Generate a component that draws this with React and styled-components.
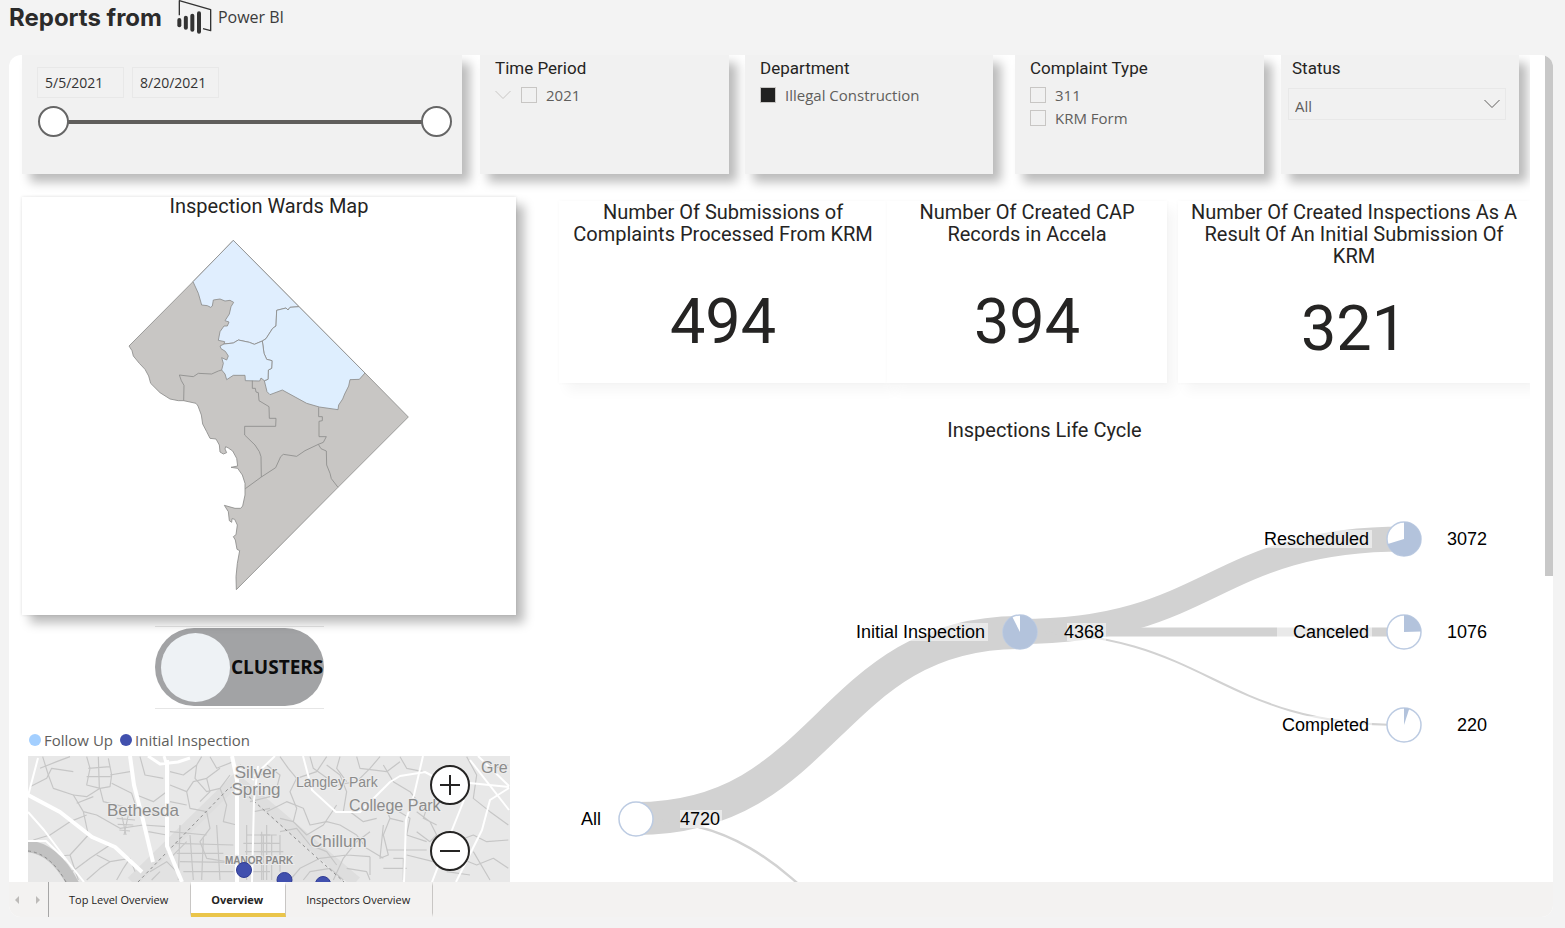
import React, { useState } from "react";
import styled, { createGlobalStyle } from "styled-components";

const din = `Roboto, "Liberation Sans", sans-serif`;
const segoe = `"Open Sans", "Noto Sans", sans-serif`;
const arial = `"Liberation Sans", Arial, sans-serif`;

const GlobalStyle = createGlobalStyle`
  *, *::before, *::after { box-sizing: border-box; }
  body { margin: 0; background: #f3f3f3; color: #252423; font-family: ${segoe}; }
  h1, h2, p, ul { margin: 0; padding: 0; font-weight: 500; }
  button, input, select { font: inherit; color: inherit; margin: 0; }
  svg { display: block; }
`;

const Page = styled.div`
  display: flex;
  flex-direction: column;
  height: 100vh;
  padding: 0 12px 11px 9px;
`;

const Header = styled.header`
  display: flex;
  align-items: flex-start;
  height: 55px;
  flex: none;
`;

const PageTitle = styled.h1`
  font: 700 24px/36px Inter, sans-serif;
  color: #2b2b2b;
  margin-right: 14px;
`;

const Brand = styled.span`
  display: flex;
  align-items: center;
  gap: 6px;
  font-size: 16px;
  line-height: 34px;
  color: #3b3b3b;
`;

const Frame = styled.main`
  flex: 1;
  min-height: 0;
  display: flex;
  flex-direction: column;
  border-radius: 12px;
  overflow: hidden;
  background: #fff;
`;

const Viewport = styled.div`
  flex: 1;
  min-height: 0;
  display: flex;
`;

const Canvas = styled.div`
  flex: 1;
  min-width: 0;
  overflow: hidden;
  padding-left: 13px;
  margin-right: 15px;
`;

const ScrollThumb = styled.div`
  width: 8px;
  height: 63%;
  background: #c8c8c8;
`;

const FilterRow = styled.section`
  display: grid;
  grid-template-columns: 440fr 267fr 264fr 271fr 255fr;
  height: 119px;
  padding-right: 11px;
`;

const FilterCard = styled.div`
  min-width: 0;
  margin-left: ${(p) => p.$gap || 0}px;
  padding: ${(p) => p.$padding || "2px 15px"};
  background: #f1f1f1;
  box-shadow: 8px 8px 10px rgba(0, 0, 0, 0.27);
`;

const FilterTitle = styled.h2`
  display: block;
  font: 400 17px/22px ${din};
  margin-bottom: 4px;
  padding-left: ${(p) => p.$inset || 0}px;
`;

const DateFields = styled.div`
  display: flex;
  gap: 8px;
`;

const DateInput = styled.input`
  width: 87px;
  height: 31px;
  padding: 0 7px;
  border: 1px solid #e8e8e8;
  background: transparent;
  font-size: 14px;
  color: #333;
`;

const RangeSlider = styled.div`
  display: grid;
  align-items: center;
  margin-top: 8px;
  margin-left: 1px;
  height: 31px;

  &::before {
    content: "";
    grid-area: 1 / 1;
    height: 4px;
    margin: 0 15px;
    background: #605e5c;
  }
`;

const RangeHandle = styled.input`
  grid-area: 1 / 1;
  appearance: none;
  width: 100%;
  height: 31px;
  background: transparent;
  pointer-events: none;

  &::-webkit-slider-thumb {
    appearance: none;
    width: 31px;
    height: 31px;
    border-radius: 50%;
    border: 2px solid #666;
    background: #fff;
    pointer-events: auto;
  }
`;

const Option = styled.label`
  display: flex;
  align-items: center;
  gap: 9px;
  height: 23px;
  font-size: 15px;
  color: #605e5c;

  > svg { margin-right: 1px; }
`;

const CheckBox = styled.input`
  appearance: none;
  flex: none;
  width: 16px;
  height: 16px;
  border: 1px solid #c8c6c4;
  background: transparent;

  &:checked { background: #212121; }
`;

const SelectBox = styled.div`
  display: grid;
  align-items: center;
  margin-top: 9px;
  color: #605e5c;

  > * { grid-area: 1 / 1; }
  > svg { justify-self: end; margin-right: 6px; pointer-events: none; }
`;

const Select = styled.select`
  appearance: none;
  width: 100%;
  height: 32px;
  padding: 3px 6px 0;
  border: 1px solid #e8e8e8;
  border-radius: 0;
  background: transparent;
  font-size: 15px;
`;

const Body = styled.div`
  display: grid;
  grid-template-columns: 494fr 971fr;
  column-gap: 43px;
  align-items: start;
  margin-top: 23px;
`;

const LeftColumn = styled.div`
  min-width: 0;
`;

const RightColumn = styled.div`
  min-width: 0;
  padding-top: 4px;
`;

const WardsCard = styled.section`
  position: relative;
  z-index: 1;
  height: 418px;
  background: #fff;
  box-shadow: 8px 8px 10px rgba(0, 0, 0, 0.27), 0 0 3px rgba(0, 0, 0, 0.12);

  > svg { margin: 23px auto 0; }
`;

const SectionTitle = styled.h2`
  font: 400 20px/${(p) => p.$line || 22}px ${din};
  text-align: center;
`;

const ToggleSlot = styled.div`
  display: flex;
  width: 169px;
  margin: 11px 0 0 133px;
  padding: 1px 0 2px;
  border-top: 1px solid #e6e6e6;
  border-bottom: 1px solid #e6e6e6;
`;

const Toggle = styled.button`
  display: flex;
  align-items: center;
  width: 100%;
  height: 78px;
  padding: 0 0 0 6px;
  border: 0;
  border-radius: 39px;
  background: #a2a3a5;
  font-size: 19px;
  font-weight: 700;
  color: #0c0c0c;
`;

const Knob = styled.span`
  flex: none;
  width: 69px;
  height: 69px;
  margin-right: 1px;
  border-radius: 50%;
  background: #eef2f5;
`;

const Legend = styled.ul`
  display: flex;
  gap: 7px;
  margin: 19px 0 4px 7px;
  list-style: none;
  font-size: 15px;
  line-height: 24px;
  color: #605e5c;
`;

const LegendItem = styled.li`
  display: flex;
  align-items: center;
  gap: 3px;

  &::before {
    content: "";
    width: 12px;
    height: 12px;
    border-radius: 50%;
    background: ${(p) => p.$color};
  }
`;

const BaseMap = styled.section`
  position: relative;
  margin: 0 6px;

  > svg { width: 100%; height: auto; }
`;

const ZoomControls = styled.div`
  position: absolute;
  top: 9px;
  right: 40px;
  display: flex;
  flex-direction: column;
  gap: 26px;
`;

const ZoomButton = styled.button`
  display: grid;
  place-items: center;
  width: 40px;
  height: 40px;
  padding: 0;
  border: 2px solid #252423;
  border-radius: 50%;
  background: #fff;
`;

const KpiRow = styled.section`
  display: grid;
  grid-template-columns: 328fr 280fr 363fr;
  height: 182px;
`;

const KpiCard = styled.article`
  min-width: 0;
  display: flex;
  flex-direction: column;
  margin-left: ${(p) => p.$gap || 0}px;
  padding: 0 8px;
  background: #fff;
  box-shadow: 8px 8px 12px rgba(0, 0, 0, 0.04), 0 0 4px rgba(0, 0, 0, 0.03);

  &::after { content: ""; flex: 1; }
`;

const KpiValue = styled.p`
  flex: 2 0 auto;
  display: flex;
  align-items: flex-end;
  justify-content: center;
  font: 400 63px/95px ${din};
`;

const LifeCycle = styled.section`
  margin-top: 36px;

  > svg { width: 100%; height: auto; font: 18px ${arial}; fill: #000; }
`;

const TabBar = styled.nav`
  display: flex;
  flex: none;
  height: 35px;
  background: #f3f2f1;
`;

const Pager = styled.div`
  display: flex;
  align-items: center;
  justify-content: space-between;
  width: 40px;
  padding: 0 6px 0 4px;
  border-right: 1px solid #a6a6a6;
`;

const PagerButton = styled.button`
  padding: 0;
  border: 0;
  background: none;
  color: #bdbbb9;
`;

const Tab = styled.button`
  padding: 0 22px 0 20px;
  border: 0;
  border-right: 1px solid #c8c6c4;
  border-top: 4px solid transparent;
  border-bottom: 4px solid ${(p) => (p.$active ? "#eac54a" : "transparent")};
  background: ${(p) => (p.$active ? "#fff" : "transparent")};
  background-clip: border-box;
  font-size: 11px;
  font-weight: ${(p) => (p.$active ? 700 : 400)};
  color: #252423;
`;

function PowerBiLogo() {
  return (
    <svg width="36" height="34" viewBox="531 0 108 102" fill="none" stroke="#333" aria-hidden="true">
      <path d="M541 46V2L635 29V92L612 86" strokeWidth="4" strokeLinejoin="round" />
      <g strokeWidth="12" strokeLinecap="round">
        <path d="M541 60V76" />
        <path d="M560.500 53V83" />
        <path d="M580 47V89" />
        <path d="M600 40V95" />
      </g>
    </svg>
  );
}

function Chevron({ color }) {
  return (
    <svg width="16" height="10" viewBox="0 0 16 10" fill="none" stroke={color} aria-hidden="true">
      <path d="M.5 1 8 8.500 15.500 1" />
    </svg>
  );
}

function WardsMap() {
  return (
    <svg width="284" height="354" viewBox="51 144 852 1062" stroke="#8c8b8a" strokeWidth="2.500" strokeLinejoin="round" role="img" aria-label="Wards">
      <path
        fill="#c8c6c4"
        d="M370 151 567 350 765 549 895 681 684 892 379 1199 378 1160 382 1120 389 1082 381 1078 376 1050 370 1040 378 1034 382 1005 374 988 366 986 365 997 358 992 355 965 343 946 375 955 392 955 398 948 405 915 405 880 397 855 383 835 363 832 383 828 380 805 368 783 355 774 347 770 345 777 350 788 340 792 330 786 328 765 318 747 300 745 290 725 278 702 274 675 264 648 258 640 221 632 205 632 180 627 150 608 122 580 116 558 105 538 88 520 70 498 66 482 57 468 249 275Z"
      />
      <path
        fill="#e0eefe"
        d="M370 151 567 350 540 352 534 360 528 354 500 361 498 408 488 415 468 446 457 453 433 463 418 457 385 450 370 459 342 462 344 455 325 451 330 425 342 408 352 408 357 396 345 392 358 372 363 350 371 337 360 331 345 333 330 327 310 330 307 348 302 352 292 347 275 345 265 310 249 275Z"
      />
      <path
        fill="#deeefe"
        d="M567 350 765 549 748 568 720 569 716 588 704 612 698 627 686 645 684 659 628 651 590 640 517 600 480 614 471 605 463 572 474 568 475 540 485 535 486 512 470 508 462 490 457 453 468 446 488 415 498 408 500 361 528 354 534 360 540 352Z"
      />
      <path
        fill="#deeefe"
        d="M342 462 370 459 385 450 418 457 433 463 457 453 462 490 470 508 486 512 485 535 475 540 474 568 463 572 453 564 449 573 406 572 405 556 370 556 350 569 345 552 335 540 340 520 335 503 350 510 355 498 346 484 333 476 330 468Z"
      />
      <g fill="none">
        <path d="M335 540 325 543 305 552 265 550 250 560 208 555 214 572 222 586 221 632" />
        <path d="M427 572V595H436L438 606 445 608 447 632 477 650 478 685H498L497 709H404V735L435 765 448 785 453 800 454 861" />
        <path d="M406 896 454 861 497 833 512 800 520 793 560 799 585 782 625 763 640 757 649 740H627V694L637 692V680H626V652" />
        <path d="M625 763 633 776 649 783 650 825 660 850 664 866 684 892" />
      </g>
    </svg>
  );
}

function StreetMap() {
  return (
    <svg viewBox="28 756 482 126" fill="none" role="img" aria-label="Street map">
      <rect x="28" y="756" width="482" height="126" fill="#e8e8e8" />
      <path d="M140 882 236 786 344 882Z" fill="#e2e2e2" />
      <path d="M132 882 236 780 356 882" stroke="#dedede" strokeWidth="12" />

      <g transform="translate(20 725) scale(.33333)" stroke="#c6c6c6" strokeWidth="3.500" strokeLinejoin="round">
        <path d="M68 95 85 150 100 190 160 210 190 260 205 330" />
        <path d="M60 130 110 110 150 95M30 185 80 160 95 130 160 140" />
        <path d="M200 95 210 130 200 180 240 190 270 185 275 150 265 100M205 130 270 125M200 155 272 155M235 95 238 190" />
        <path d="M270 150 330 140M275 175 335 205 350 250M240 190 250 230 310 245" />
        <path d="M160 210 200 215 240 190M170 235 220 215M190 260 230 270 300 310 370 300 440 305" />
        <path d="M40 345 90 330 150 290 200 270M60 400 150 390 205 330M150 390 175 465M110 470 170 430 210 400 270 360" />
        <path d="M230 390 270 410 330 400 345 440M200 465 240 430 270 410M290 465 310 430 330 400" />
        <path d="M290 280 345 285M293 298 340 300M298 315 330 318M305 270 318 330M325 270 312 330" />
        <path d="M360 95 375 150 430 160M350 210 400 230 440 200M380 260 440 270M385 320 440 330" />
        <path d="M450 140 490 150 530 120 545 95M450 180 500 200 520 170 560 160 600 130" />
        <path d="M500 200 510 250 560 260 570 310 540 350 560 400 620 410M450 230 500 240" />
        <path d="M530 120 525 160 560 200 600 190 630 150M560 160 570 200 540 230" />
        <path d="M450 320 560 330M465 355 640 360M470 385 610 385M480 410 620 412M490 440 640 440" />
        <path d="M480 300 475 465M510 330 520 465M550 340 545 465M590 300 600 465M500 350 450 400" />
        <path d="M600 190 620 240 610 290 650 300M570 95 590 130 640 110M680 330H750M670 355H750M675 380H750M670 440H750" />
        <path d="M680 300V465M725 320V465M740 300V465M690 230 750 215M700 260 750 250M660 120 720 150 750 140" />
        <path d="M390 440 440 410 470 440M395 465 420 440" />
      </g>
      <g transform="translate(260 725) scale(.33333)" stroke="#c6c6c6" strokeWidth="3.500" strokeLinejoin="round">
        <path d="M60 95 85 130 110 160 90 200 110 250 100 290 60 280M110 160 170 140 200 95" />
        <path d="M150 95 160 130 230 180 290 170 330 130 360 95M200 120 240 150 260 200 250 260" />
        <path d="M20 260 80 230 130 250 150 300 200 290 240 300 290 330 320 370 370 400" />
        <path d="M100 290 140 330 190 300 230 240M60 320 110 310 150 360 200 380 230 420" />
        <path d="M0 330H50M0 355H60M0 380H70M10 330V465M35 330V465M60 330V440" />
        <path d="M90 465 120 430 180 400 260 390 330 395M220 465 250 400 290 350 330 320" />
        <path d="M130 465 150 440 210 430 250 465M260 430 320 440 330 465M330 395V450" />
        <path d="M370 230 390 280 370 330 385 390 360 400 370 300M390 280 430 290" />
        <path d="M400 250 450 280 440 330 500 350M380 375H500M400 400H430V465M370 430H440" />
        <path d="M470 260 510 290 530 330 510 350 470 320M500 250 490 280 530 300M440 390 520 410" />
        <path d="M420 95 440 130 490 140M370 120 400 170 450 200 490 250M290 95 300 130 380 140 420 110" />
        <path d="M560 360 640 330 680 350 745 345M600 400 650 420 700 400 745 430M640 380 690 465M560 440 630 450" />
        <path d="M620 95 650 150 640 220 690 260 745 300M680 110 700 130 745 120" />
        <path d="M240 95 230 130 260 170M20 120 60 150 50 190M270 260 310 290 350 280" />
      </g>

      <path d="M28 842 Q53 842 70 882H28Z" fill="#e8e8e8" />
      <path d="M24 846Q54 846 74 886" stroke="#c2c2c2" strokeWidth="12" />
      <path d="M28 851Q50 853 66 882M138 882 228 789 236 785 344 882" stroke="#8f8f8f" strokeDasharray="3 3" />

      <g stroke="#fff" strokeWidth="3" strokeLinejoin="round">
        <path d="M28 795 60 812 92 837 115 847 142 872" strokeWidth="4" />
        <path d="M130 756 134 785 143 820 153 862M167 760V846L182 882" strokeWidth="4" />
        <path d="M148 756 160 764 178 762 190 758M164 756 167 766" />
        <path d="M232 756 237 780V882" strokeWidth="4" />
        <path d="M258 766 254 800 252 882M234 765 254 780M254 776 275 756M28 796 38 758M28 812 44 830 68 862 84 882M28 841H46L66 860" strokeWidth="2" />
        <path d="M303 756 312 790 336 812H360L390 782 400 776 425 772 440 780 509 787" strokeWidth="2" />
        <path d="M423 756 414 795 406 820 404 882M478 756 509 786M470 760 509 810" strokeWidth="2" />
        <path d="M509 788 490 800 482 830 456 882M464 800 452 830 432 882" strokeWidth="2" />
      </g>

      <g fill="#8b8b8b" fontFamily="Liberation Sans, Arial, sans-serif" fontSize="17" stroke="#ececec" strokeWidth="2" paintOrder="stroke">
        <text x="107" y="816">Bethesda</text>
        <text x="256" y="778" textAnchor="middle">Silver</text>
        <text x="256" y="795" textAnchor="middle">Spring</text>
        <text x="296" y="787" fontSize="14">Langley Park</text>
        <text x="349" y="811" fontSize="16">College Park</text>
        <text x="310" y="847">Chillum</text>
        <text x="481" y="773" fontSize="16">Gre</text>
        <text x="225" y="864" fontSize="10" fontWeight="700">MANOR PARK</text>
      </g>

      <g fill="#4150ae" stroke="#303c94">
        <circle cx="244" cy="870" r="7.500" />
        <circle cx="284.500" cy="880" r="7.500" />
        <circle cx="323" cy="884" r="7.500" />
      </g>
    </svg>
  );
}

const flows = [
  { d: "M636 818.500C828 818.500 828 632.500 1020 632.500", w: 33 },
  { d: "M636 819C828 819 828 1005 1020 1005", w: 2.5 },
  { d: "M1020 631.500C1212 631.500 1212 539 1404 539", w: 25 },
  { d: "M1020 632H1404", w: 9 },
  { d: "M1020 632C1212 632 1212 725 1404 725", w: 2 },
];

const nodes = [
  { x: 636, y: 819, share: 0, label: "All", value: "4720", labelX: 601, valueX: 680, anchor: "start", plate: [680, 42] },
  { x: 1020, y: 632, share: 0.925, label: "Initial Inspection", value: "4368", labelX: 985, valueX: 1064, anchor: "start", cover: [857, 131], plate: [1067, 39] },
  { x: 1404, y: 539, share: 0.703, label: "Rescheduled", value: "3072", labelX: 1369, valueX: 1487, anchor: "end", cover: [1265, 107] },
  { x: 1404, y: 632, share: 0.246, label: "Canceled", value: "1076", labelX: 1369, valueX: 1487, anchor: "end", cover: [1277, 95] },
  { x: 1404, y: 725, share: 0.05, label: "Completed", value: "220", labelX: 1369, valueX: 1487, anchor: "end", cover: [1281, 91] },
];

function Node({ x, y, share, label, value, labelX, valueX, anchor, cover, plate }) {
  const r = 17;
  const a = share * Math.PI * 2;
  const slice = `M${x} ${y}V${y - r}A${r} ${r} 0 ${share > 0.5 ? 1 : 0} 1 ${x + r * Math.sin(a)} ${y - r * Math.cos(a)}Z`;
  return (
    <g>
      <circle cx={x} cy={y} r={r} fill="#fff" stroke="#bccbe2" strokeWidth="1.500" />
      {share > 0 && <path d={slice} fill="#b3c3dc" />}
      <g fill="#fff" fillOpacity=".5">
        {cover && <rect x={cover[0]} y={y - 9} width={cover[1]} height="18" />}
        {plate && <rect x={plate[0]} y={y - 9} width={plate[1]} height="18" />}
      </g>
      <text x={labelX} y={y + 6} textAnchor="end">{label}</text>
      <text x={valueX} y={y + 6} textAnchor={anchor}>{value}</text>
    </g>
  );
}

function LifeCycleChart() {
  return (
    <svg viewBox="559 441 971 441" role="img" aria-label="Inspections flow">
      <g fill="none" stroke="#d2d2d2">
        {flows.map((f) => (
          <path key={f.d} d={f.d} strokeWidth={f.w} />
        ))}
      </g>
      {nodes.map((n) => (
        <Node key={n.label} {...n} />
      ))}
    </svg>
  );
}

const kpis = [
  { title: "Number Of Submissions of Complaints Processed From KRM", value: 494 },
  { title: "Number Of Created CAP Records in Accela", value: 394 },
  { title: "Number Of Created Inspections As A Result Of An Initial Submission Of KRM", value: 321, gap: 11 },
];

const tabs = ["Top Level Overview", "Overview", "Inspectors Overview"];

export default function App() {
  const [tab, setTab] = useState("Overview");
  const [clusters, setClusters] = useState(false);

  return (
    <>
      <GlobalStyle />
      <Page>
        <Header>
          <PageTitle>Reports from</PageTitle>
          <Brand>
            <PowerBiLogo />
            Power BI
          </Brand>
        </Header>
        <Frame>
          <Viewport>
            <Canvas>
              <FilterRow>
                <FilterCard $padding="12px 10px 0 15px">
                  <DateFields>
                    <DateInput aria-label="Start date" defaultValue="5/5/2021" />
                    <DateInput aria-label="End date" defaultValue="8/20/2021" />
                  </DateFields>
                  <RangeSlider>
                    <RangeHandle type="range" aria-label="Range start" defaultValue={0} />
                    <RangeHandle type="range" aria-label="Range end" defaultValue={100} />
                  </RangeSlider>
                </FilterCard>
                <FilterCard $gap={18}>
                  <FilterTitle>Time Period</FilterTitle>
                  <Option>
                    <Chevron color="#c8c6c4" />
                    <CheckBox type="checkbox" />
                    2021
                  </Option>
                </FilterCard>
                <FilterCard $gap={16}>
                  <FilterTitle>Department</FilterTitle>
                  <Option>
                    <CheckBox type="checkbox" defaultChecked />
                    Illegal Construction
                  </Option>
                </FilterCard>
                <FilterCard $gap={22}>
                  <FilterTitle>Complaint Type</FilterTitle>
                  <Option>
                    <CheckBox type="checkbox" />
                    311
                  </Option>
                  <Option>
                    <CheckBox type="checkbox" />
                    KRM Form
                  </Option>
                </FilterCard>
                <FilterCard $gap={17} $padding="2px 13px 2px 7px">
                  <FilterTitle as="label" htmlFor="status" $inset={4}>Status</FilterTitle>
                  <SelectBox>
                    <Select id="status">
                      <option>All</option>
                    </Select>
                    <Chevron color="#605e5c" />
                  </SelectBox>
                </FilterCard>
              </FilterRow>
              <Body>
                <LeftColumn>
                  <WardsCard>
                    <SectionTitle $line={18}>Inspection Wards Map</SectionTitle>
                    <WardsMap />
                  </WardsCard>
                  <ToggleSlot>
                    <Toggle role="switch" aria-checked={clusters} onClick={() => setClusters(!clusters)}>
                      <Knob />
                      CLUSTERS
                    </Toggle>
                  </ToggleSlot>
                  <Legend>
                    <LegendItem $color="#a3cfff">Follow Up</LegendItem>
                    <LegendItem $color="#4150ae">Initial Inspection</LegendItem>
                  </Legend>
                  <BaseMap>
                    <StreetMap />
                    <ZoomControls>
                      <ZoomButton aria-label="Zoom in">
                        <svg width="20" height="20" viewBox="0 0 20 20" stroke="#252423" strokeWidth="2">
                          <path d="M10 0V20M0 10H20" />
                        </svg>
                      </ZoomButton>
                      <ZoomButton aria-label="Zoom out">
                        <svg width="20" height="20" viewBox="0 0 20 20" stroke="#252423" strokeWidth="2">
                          <path d="M0 10H20" />
                        </svg>
                      </ZoomButton>
                    </ZoomControls>
                  </BaseMap>
                </LeftColumn>
                <RightColumn>
                  <KpiRow>
                    {kpis.map((k) => (
                      <KpiCard key={k.value} $gap={k.gap}>
                        <SectionTitle>{k.title}</SectionTitle>
                        <KpiValue>{k.value}</KpiValue>
                      </KpiCard>
                    ))}
                  </KpiRow>
                  <LifeCycle>
                    <SectionTitle>Inspections Life Cycle</SectionTitle>
                    <LifeCycleChart />
                  </LifeCycle>
                </RightColumn>
              </Body>
            </Canvas>
            <ScrollThumb />
          </Viewport>
          <TabBar>
            <Pager>
              <PagerButton aria-label="Previous page">
                <svg width="8" height="8" viewBox="0 0 8 8" fill="currentColor"><path d="M6 0V8L2 4Z" /></svg>
              </PagerButton>
              <PagerButton aria-label="Next page">
                <svg width="8" height="8" viewBox="0 0 8 8" fill="currentColor"><path d="M2 0V8L6 4Z" /></svg>
              </PagerButton>
            </Pager>
            {tabs.map((t) => (
              <Tab key={t} $active={t === tab} onClick={() => setTab(t)}>
                {t}
              </Tab>
            ))}
          </TabBar>
        </Frame>
      </Page>
    </>
  );
}
